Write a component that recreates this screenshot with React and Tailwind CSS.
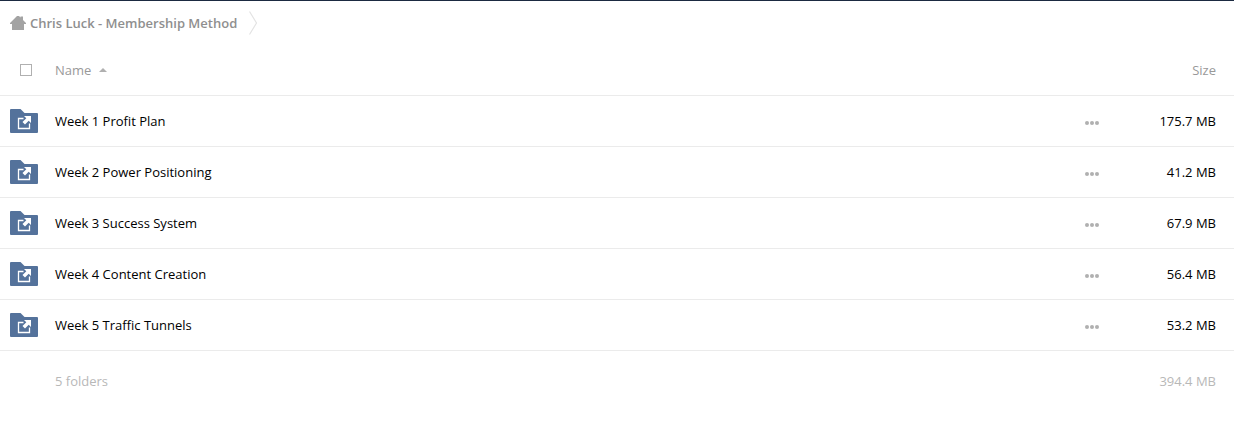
import React, { useState } from 'react';

const folders = [
  { name: 'Week 1 Profit Plan', size: '175.7 MB' },
  { name: 'Week 2 Power Positioning', size: '41.2 MB' },
  { name: 'Week 3 Success System', size: '67.9 MB' },
  { name: 'Week 4 Content Creation', size: '56.4 MB' },
  { name: 'Week 5 Traffic Tunnels', size: '53.2 MB' },
];

const HomeIcon = () => (
  <svg width="16" height="14" viewBox="0 0 16 14" fill="#a3a3a3" aria-hidden="true">
    <path d="M7 0H9L10.5 1.5V0.5H13V4L16 7V8H14V14H2V8H0V7Z" />
  </svg>
);

const Chevron = () => (
  <svg width="9" height="24" viewBox="0 0 9 24" fill="none" stroke="#e3e3e3" strokeWidth="1.2" aria-hidden="true">
    <path d="M0.5 0.5L7.5 12L0.5 23.5" />
  </svg>
);

const FolderIcon = () => (
  <svg width="28" height="24" viewBox="0 0 28 24" aria-hidden="true">
    <path d="M1 0H10.5L14.5 4H27Q28 4 28 5V23Q28 24 27 24H1Q0 24 0 23V1Q0 0 1 0Z" fill="#54729b" />
    <path d="M13.5 9.5H8.5V19.5H19.5V14.5" fill="none" stroke="#fff" strokeWidth="1.3" />
    <path d="M14 7H21V14L18.7 11.7L15 15.5L12.5 13L16.3 9.3Z" fill="#fff" />
  </svg>
);

const DotsIcon = () => (
  <svg width="14" height="4" viewBox="0 0 14 4" fill="#b0b0b0" aria-hidden="true">
    <circle cx="2" cy="2" r="2" />
    <circle cx="7" cy="2" r="2" />
    <circle cx="12" cy="2" r="2" />
  </svg>
);

const Checkbox = ({ label, checked, onChange }) => (
  <input
    type="checkbox"
    aria-label={label}
    checked={checked}
    onChange={onChange}
    className="block size-3 appearance-none border border-[#b0b0b0] bg-white checked:bg-[#54729b]"
  />
);

const App = () => {
  const [allSelected, setAllSelected] = useState(false);
  const [ascending, setAscending] = useState(true);
  const rows = ascending ? folders : [...folders].reverse();

  return (
    <div className="border-t border-[#1b2a41] bg-white font-['Open_Sans','Noto_Sans',sans-serif] text-[13px] leading-5 text-black">
      {/* Breadcrumb */}
      <nav aria-label="Breadcrumb" className="flex h-11 items-center gap-3 px-2.5">
        <a href="#" className="flex items-center gap-1 font-semibold text-[#8f8f8f]">
          <HomeIcon />
          Chris Luck - Membership Method
        </a>
        <Chevron />
      </nav>

      {/* File list */}
      <table className="w-full table-fixed border-collapse">
        <colgroup>
          <col className="w-[55px]" />
          <col />
          <col className="w-12" />
          <col className="w-[111px]" />
        </colgroup>
        <thead>
          <tr className="h-[50px] border-b border-[#ebebeb] text-[#999]">
            <th className="pl-5">
              <Checkbox
                label="Select all"
                checked={allSelected}
                onChange={(e) => setAllSelected(e.target.checked)}
              />
            </th>
            <th className="text-left font-normal">
              <button type="button" className="flex items-center gap-2" onClick={() => setAscending(!ascending)}>
                Name
                <svg width="8" height="4" viewBox="0 0 8 4" fill="#b0b0b0" className={ascending ? '' : 'rotate-180'} aria-hidden="true">
                  <path d="M4 0L8 4H0Z" />
                </svg>
              </button>
            </th>
            <th aria-label="Actions" />
            <th className="pr-4.5 text-right font-normal">Size</th>
          </tr>
        </thead>
        <tbody>
          {rows.map((folder) => (
            <tr key={folder.name} className="h-[51px] border-b border-[#ebebeb]">
              <td className="pl-2.5">
                <FolderIcon />
              </td>
              <td>
                <a href="#">{folder.name}</a>
              </td>
              <td>
                <button type="button" aria-label={`More actions for ${folder.name}`} className="flex px-2.5 pt-3 pb-2">
                  <DotsIcon />
                </button>
              </td>
              <td className="pr-4.5 text-right">{folder.size}</td>
            </tr>
          ))}
        </tbody>
        <tfoot>
          <tr className="h-[61px] text-[#b8b8b8]">
            <td />
            <td>{folders.length} folders</td>
            <td />
            <td className="pr-4.5 text-right">394.4 MB</td>
          </tr>
        </tfoot>
      </table>
    </div>
  );
};

export default App;
